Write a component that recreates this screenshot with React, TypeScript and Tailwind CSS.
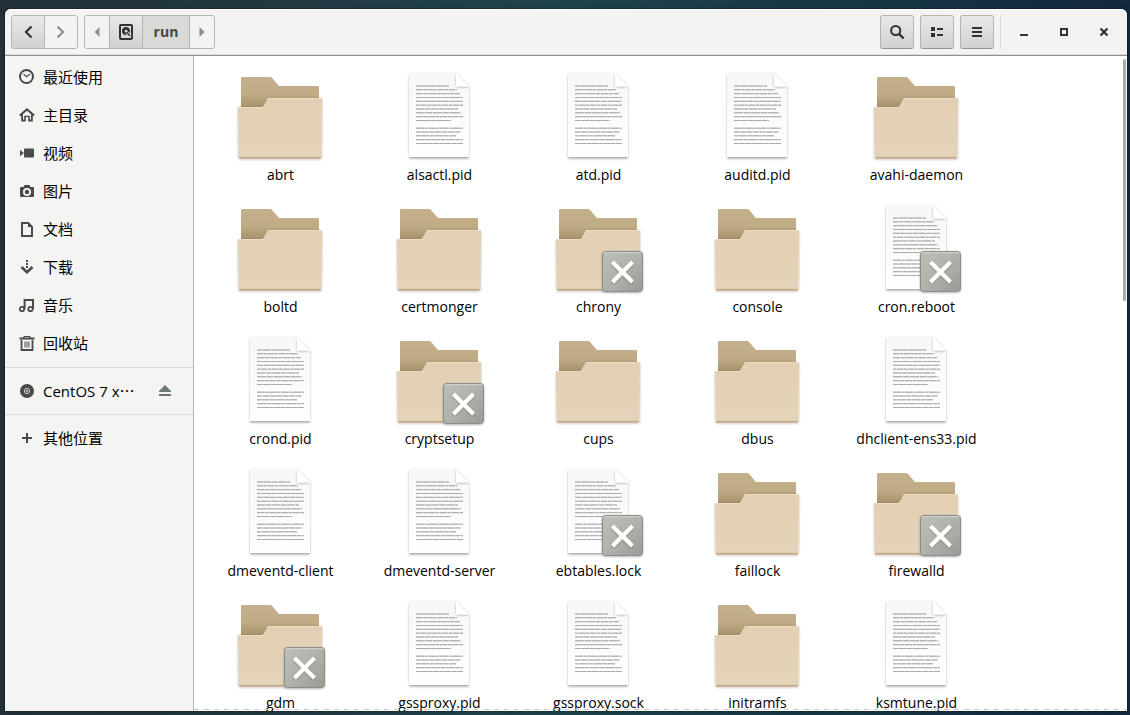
import type { ReactNode } from 'react';

type FileKind = 'folder' | 'text';

type FileItem = {
  name: string;
  kind: FileKind;
  locked?: boolean;
};

const files: FileItem[] = [
  { name: 'abrt', kind: 'folder' },
  { name: 'alsactl.pid', kind: 'text' },
  { name: 'atd.pid', kind: 'text' },
  { name: 'auditd.pid', kind: 'text' },
  { name: 'avahi-daemon', kind: 'folder' },
  { name: 'boltd', kind: 'folder' },
  { name: 'certmonger', kind: 'folder' },
  { name: 'chrony', kind: 'folder', locked: true },
  { name: 'console', kind: 'folder' },
  { name: 'cron.reboot', kind: 'text', locked: true },
  { name: 'crond.pid', kind: 'text' },
  { name: 'cryptsetup', kind: 'folder', locked: true },
  { name: 'cups', kind: 'folder' },
  { name: 'dbus', kind: 'folder' },
  { name: 'dhclient-ens33.pid', kind: 'text' },
  { name: 'dmeventd-client', kind: 'text' },
  { name: 'dmeventd-server', kind: 'text' },
  { name: 'ebtables.lock', kind: 'text', locked: true },
  { name: 'faillock', kind: 'folder' },
  { name: 'firewalld', kind: 'folder', locked: true },
  { name: 'gdm', kind: 'folder', locked: true },
  { name: 'gssproxy.pid', kind: 'text' },
  { name: 'gssproxy.sock', kind: 'text' },
  { name: 'initramfs', kind: 'folder' },
  { name: 'ksmtune.pid', kind: 'text' },
];

// [y, end x, dash pattern] for every line of the text file icon
const textLines: [number, number, string][] = [
  [18, 58, '5 1 8 1'],
  [21.8, 66, '6 1 3 1'],
  [25.7, 69, '7 1 4 1'],
  [29.5, 72, '4 1 9 1'],
  [33.3, 72, '6 1 5 1'],
  [37.2, 72, '3 1 6 1'],
  [41, 67, '8 1 5 1'],
  [44.8, 70, '9 1 6 1'],
  [48.7, 72, '7 1 3 1'],
  [52.5, 60, '5 1 7 1'],
  [60.2, 72, '8 1 2 1'],
  [64, 70, '5 1 6 1'],
  [67.800, 65, '4 1 8 1'],
  [71.700, 72, '9 1 4 1'],
  [75.500, 72, '4 1 6 1'],
];

const Icon = ({ children }: { children: ReactNode }) => (
  <svg viewBox="0 0 16 16" className="w-4 h-4 shrink-0" fill="currentColor" aria-hidden="true">
    {children}
  </svg>
);

const places = [
  {
    label: '最近使用',
    icon: (
      <>
        <circle cx="7.500" cy="7.500" r="6.500" fill="none" stroke="currentColor" strokeWidth="2" />
        <path d="M4.500 5 7.500 7.700l3.500-2.700" fill="none" stroke="currentColor" strokeWidth="1.200" />
      </>
    ),
  },
  {
    label: '主目录',
    icon: (
      <>
        <path d="M.8 8.500 8 2.400l7.200 6.100" fill="none" stroke="currentColor" strokeWidth="2" />
        <path d="M2.200 8v6.400h4.600V10h2.400v4.400h4.600V8L12 6.600v6h-1.200V8.800H5.200v3.800H4v-6z" />
      </>
    ),
  },
  {
    label: '视频',
    icon: (
      <>
        <rect x="5" y="3.500" width="10" height="9" rx="1" />
        <path d="M1 4.800v6.400L4.800 8z" />
      </>
    ),
  },
  {
    label: '图片',
    icon: (
      <path
        fillRule="evenodd"
        d="M5.500 2h5l1 2H14a1 1 0 0 1 1 1v8a1 1 0 0 1-1 1H2a1 1 0 0 1-1-1V5a1 1 0 0 1 1-1h2.500zM8 5a4 4 0 1 0 0 8 4 4 0 0 0 0-8zm0 1.800a2.200 2.200 0 1 1 0 4.400 2.200 2.200 0 0 1 0-4.400z"
      />
    ),
  },
  {
    label: '文档',
    icon: (
      <>
        <path d="M3 2h6.200L13 5.800V15H3z" fill="none" stroke="currentColor" strokeWidth="2" />
        <path d="M9 1v5h5z" />
      </>
    ),
  },
  {
    label: '下载',
    icon: (
      <>
        <path d="M7 1h2v2H7zM7 4h2v2H7zM7 7h2v2H7z" />
        <path d="m2.500 8 5.500 5.200L13.500 8" fill="none" stroke="currentColor" strokeWidth="2.600" />
      </>
    ),
  },
  {
    label: '音乐',
    icon: (
      <>
        <circle cx="3" cy="12" r="2.200" fill="none" stroke="currentColor" strokeWidth="1.800" />
        <circle cx="11.500" cy="12" r="2.200" fill="none" stroke="currentColor" strokeWidth="1.800" />
        <path d="M5.600 12V3h8.400v9" fill="none" stroke="currentColor" strokeWidth="2" />
      </>
    ),
  },
  {
    label: '回收站',
    icon: (
      <>
        <path d="M.5 2.500H4L5 1h6l1 1.500h3.500v2H.5zM5.600 2.500h4.800V2H5.600z" />
        <path d="M2.500 5v10h11V5" fill="none" stroke="currentColor" strokeWidth="1.800" />
        <path d="M5.500 6.500h1v6h-1zM7.500 6.500h1v6h-1zM9.500 6.500h1v6h-1z" />
      </>
    ),
  },
];

const FolderShape = () => (
  <>
    <path
      d="M10 9h28q1 0 1.700.6L47 18h39q1 0 1 1v25H9V10q0-1 1-1z"
      fill="url(#folderBack)"
    />
    <path
      d="M7 39h23q1.300 0 2-1l4-7q.6-1 2-1h51q1 0 1 1l-.5 58q0 1.500-1.500 1.500h-80Q6.500 90.500 6.500 89L6 40q0-1 1-1z"
      fill="url(#folderFront)"
      filter="url(#drop)"
    />
    <path d="M7 89h82q-.2 1.500-1.500 1.500h-79Q7.200 90.500 7 89z" fill="#c1a27e" />
    <path d="M7 39.500h24l5-9h53" fill="none" stroke="#efdfca" strokeWidth="0.8" />
  </>
);

const TextFileShape = () => (
  <>
    <path d="M19 5.500h46L78 18.500V90H18V6.500q0-1 1-1z" fill="url(#paper)" filter="url(#drop)" />
    <path d="M65 5.500 78 18.500H66.500q-1.500 0-1.500-1.500z" fill="#ffffff" filter="url(#drop)" />
    <path d="M18.500 89.500h59" stroke="#b4b4b4" strokeWidth="1" />
    {textLines.map(([y, end, dash]) => (
      <g key={y} strokeWidth="0.9">
        <path d={`M25 ${y}H${end}`} stroke="#c4c4c4" />
        <path d={`M25 ${y}H${end}`} stroke="#a4a4a4" strokeDasharray={dash} />
      </g>
    ))}
  </>
);

const LockedEmblem = () => (
  <>
    <rect x="52.500" y="51.500" width="40" height="40" rx="3" fill="url(#emblem)" stroke="#8b8e87" filter="url(#drop)" />
    <path d="M54 52.700h37" stroke="#d2d5cf" strokeWidth="1" />
    <path d="m62.500 62 20 20M82.500 62l-20 20" fill="none" stroke="#ffffff" strokeWidth="4" filter="url(#drop)" />
  </>
);

// gradients shared by all the file icons
const IconDefs = () => (
  <svg className="absolute w-0 h-0" aria-hidden="true">
    <defs>
      <linearGradient id="folderBack" x1="0" y1="0" x2="0" y2="1">
        <stop offset="0" stopColor="#c4b18c" />
        <stop offset="0.5" stopColor="#bfab84" />
        <stop offset="0.85" stopColor="#a8926b" />
      </linearGradient>
      <linearGradient id="folderFront" x1="0" y1="0" x2="0" y2="1">
        <stop offset="0" stopColor="#e3cfb3" />
        <stop offset="1" stopColor="#e4d3ba" />
      </linearGradient>
      <linearGradient id="paper" x1="0" y1="0" x2="0" y2="1">
        <stop offset="0" stopColor="#f7f7f6" />
        <stop offset="1" stopColor="#ffffff" />
      </linearGradient>
      <linearGradient id="emblem" x1="0" y1="0" x2="1" y2="1">
        <stop offset="0" stopColor="#bcbfb7" />
        <stop offset="0.5" stopColor="#b0b3ab" />
        <stop offset="1" stopColor="#989b93" />
      </linearGradient>
      <filter id="drop" x="-10%" y="-10%" width="120%" height="125%">
        <feDropShadow dx="0" dy="0.8" stdDeviation="0.8" floodColor="#000000" floodOpacity="0.3" />
      </filter>
    </defs>
  </svg>
);

const FileTile = ({ file }: { file: FileItem }) => (
  <li>
    <button type="button" className="w-full flex flex-col items-center">
      <svg viewBox="0 0 97 96" className="w-[97px] h-24" aria-hidden="true">
        {file.kind === 'folder' ? <FolderShape /> : <TextFileShape />}
        {file.locked && <LockedEmblem />}
      </svg>
      <span className="text-sm leading-[22px] text-black whitespace-nowrap">{file.name}</span>
    </button>
  </li>
);

const ToolButton = ({ label, children }: { label: string; children: ReactNode }) => (
  <button
    type="button"
    aria-label={label}
    className="w-[34px] h-[34px] flex items-center justify-center rounded-[3px] border border-[#b5b5b0] border-b-[#95958e] bg-gradient-to-b from-[#e9e9e8] to-[#d1d1cf] text-[#2e3436]"
  >
    <Icon>{children}</Icon>
  </button>
);

const WindowButton = ({ label, children }: { label: string; children: ReactNode }) => (
  <button
    type="button"
    aria-label={label}
    className="w-[34px] h-[34px] flex items-center justify-center text-[#2e3436]"
  >
    <Icon>{children}</Icon>
  </button>
);

const HeaderBar = () => (
  <header className="flex items-center justify-between px-1.5 h-[47px] shrink-0 rounded-t-md bg-[#f3f3f2] border-b border-[#91918c] shadow-[inset_0_1px_0_#ffffff,inset_0_-1px_0_#dcdcda]">
    <div className="flex gap-1.5">
      <div className="flex h-[34px] overflow-hidden rounded-[3px] border border-[#b5b5b0]">
        <button
          type="button"
          aria-label="后退"
          className="w-[33px] flex items-center justify-center border-r border-[#b5b5b0] bg-gradient-to-b from-[#e9e9e8] to-[#d1d1cf] text-[#2e3436]"
        >
          <Icon>
            <path d="M11.500 2.500 6 8l5.500 5.500" fill="none" stroke="currentColor" strokeWidth="2.200" />
          </Icon>
        </button>
        <button type="button" aria-label="前进" disabled className="w-8 flex items-center justify-center text-[#8d9091]">
          <Icon>
            <path d="M4.500 2.500 10 8l-5.500 5.500" fill="none" stroke="currentColor" strokeWidth="2.200" />
          </Icon>
        </button>
      </div>

      <nav aria-label="路径" className="flex h-[34px] overflow-hidden rounded-[3px] border border-[#b5b5b0]">
        <button type="button" aria-label="上级" className="w-[25px] flex items-center justify-center border-r border-[#b5b5b0] text-[#8d9091]">
          <Icon>
            <path d="M10.500 3v10L5.500 8z" />
          </Icon>
        </button>
        <button
          type="button"
          aria-label="根目录"
          className="w-[33px] flex items-center justify-center border-r border-[#b5b5b0] bg-gradient-to-b from-[#e9e9e8] to-[#d1d1cf] text-[#2e3436]"
        >
          <Icon>
            <rect x="2" y="1" width="12" height="14" rx="1" fill="none" stroke="currentColor" strokeWidth="2" />
            <circle cx="8" cy="7" r="4" />
            <circle cx="8" cy="7" r="1.300" fill="#dededd" />
            <path d="m8.500 8 4 4.500" stroke="#dededd" strokeWidth="3" />
            <path d="m8.500 8 3.500 4" stroke="currentColor" strokeWidth="1.400" />
          </Icon>
        </button>
        <button
          type="button"
          className="w-[47px] border-r border-[#b5b5b0] bg-[#d9d9d7] text-sm font-bold text-[#43484a]"
        >
          run
        </button>
        <button type="button" aria-label="下级" className="w-6 flex items-center justify-center text-[#8d9091]">
          <Icon>
            <path d="M5.500 3v10l5-5z" />
          </Icon>
        </button>
      </nav>
    </div>

    <div className="flex gap-1.5">
      <ToolButton label="搜索">
        <circle cx="6.700" cy="6.500" r="4.600" fill="none" stroke="currentColor" strokeWidth="2" />
        <path d="m10 9.800 4.700 4.700" stroke="currentColor" strokeWidth="2.400" />
      </ToolButton>
      <ToolButton label="列表视图">
        <path d="M2 3h4v4H2zM2 9h4v4H2zM8 4h6v2H8zM8 10h6v2H8z" />
      </ToolButton>
      <ToolButton label="菜单">
        <path d="M3 3h10v2H3zM3 7h10v2H3zM3 11h10v2H3z" />
      </ToolButton>
      <div className="w-px h-[34px] bg-[#d9d9d7]" />
      <WindowButton label="最小化">
        <path d="M4 10h8v2H4z" />
      </WindowButton>
      <WindowButton label="最大化">
        <path d="M5 5h6v6H5z" fill="none" stroke="currentColor" strokeWidth="2" />
      </WindowButton>
      <WindowButton label="关闭">
        <path d="m4.500 4.500 7 7M11.500 4.500l-7 7" stroke="currentColor" strokeWidth="2.200" />
      </WindowButton>
    </div>
  </header>
);

const SidebarLink = ({ label, icon }: { label: ReactNode; icon: ReactNode }) => (
  <a href="#" className="flex-1 flex items-center gap-2 h-[38px] pl-3.5 text-[15px] text-black">
    <span className="text-[#4a4a48]">
      <Icon>{icon}</Icon>
    </span>
    <span>{label}</span>
  </a>
);

const Sidebar = () => (
  <aside className="w-[189px] shrink-0 pt-0.5 bg-[#f4f4f2] border-r border-[#b6b6b3]">
    <ul className="pb-px">
      {places.map((place) => (
        <li key={place.label} className="flex">
          <SidebarLink label={place.label} icon={place.icon} />
        </li>
      ))}
    </ul>
    <div className="h-px my-1 bg-[#d8d8d5]" />
    <div className="flex items-center pr-5">
      <SidebarLink
        label={
          <>
            CentOS 7 x<span className="font-['Noto_Sans_CJK_SC',sans-serif] leading-none">…</span>
          </>
        }
        icon={
          <>
            <circle cx="8" cy="8" r="7" />
            <circle cx="8" cy="8" r="2.600" fill="none" stroke="#d8d8d6" strokeWidth="1" />
            <circle cx="8" cy="8" r="1" fill="#d8d8d6" />
          </>
        }
      />
      <button type="button" aria-label="弹出" className="text-[#6d7678]">
        <Icon>
          <path d="M8 2l6 6v1H2V8zM2 11h12v2H2z" />
        </Icon>
      </button>
    </div>
    <div className="h-px my-1 bg-[#d8d8d5]" />
    <div className="flex">
      <SidebarLink label="其他位置" icon={<path d="M7 3h2v4h4v2H9v4H7V9H3V7h4z" />} />
    </div>
  </aside>
);

const App = () => {
  return (
    <div
      lang="zh-CN"
      className="h-screen pt-[9px] pr-[3px] pb-1 pl-[5px] bg-gradient-to-r from-[#22313a] via-[#20434b] to-[#11293f] font-['Open_Sans','Noto_Sans_CJK_SC',sans-serif]"
    >
      <IconDefs />
      <div className="h-full flex flex-col rounded-t-md shadow-[0_0_3px_rgba(0,0,0,0.6)]">
        <HeaderBar />
        <div className="flex-1 min-h-0 flex">
          <Sidebar />
          <main className="relative flex-1 min-w-0 overflow-hidden bg-white">
            <ul className="grid grid-cols-[repeat(auto-fill,159px)] gap-y-3.5 px-[7px] pt-3">
              {files.map((file) => (
                <FileTile key={file.name} file={file} />
              ))}
            </ul>
            {/* Scroll thumb */}
            <div className="absolute top-[3px] right-px w-[3px] h-[242px] rounded-full bg-[#a5adab]" />
            {/* Dashed edge: more content below */}
            <div className="absolute inset-x-0 bottom-px h-px bg-[repeating-linear-gradient(90deg,#cfcac6_0_5px,transparent_5px_10px)]" />
          </main>
        </div>
      </div>
    </div>
  );
};

export default App;
